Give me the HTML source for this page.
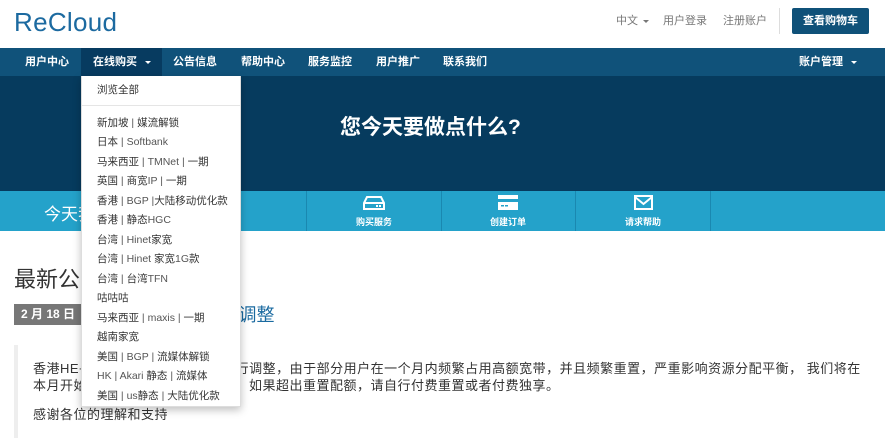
<!DOCTYPE html>
<html><head><meta charset="utf-8"><style>
*{margin:0;padding:0;box-sizing:border-box}
body{width:885px;height:445px;overflow:hidden;background:#fff;font-family:"Liberation Sans","Noto Sans CJK SC",sans-serif;position:relative;font-size:12px;color:#333}
.a{position:absolute;white-space:nowrap}
.logo{left:14px;top:7px;font-size:26px;color:#1c6aa0;letter-spacing:0.3px}
.tl{top:12px;font-size:11px;color:#777}
.btn{left:792px;top:8px;width:77px;height:26px;background:#0f5179;border-radius:2px;color:#fff;font-size:11px;font-weight:bold;text-align:center;line-height:26px}
.nav{left:0;top:48px;width:885px;height:28px;background:#10527a}
.ni{top:48px;height:28px;line-height:28px;color:#fff;font-size:11px;font-weight:bold}
.hero{left:0;top:76px;width:885px;height:115px;background:#063b5e}
.bar{left:0;top:191px;width:885px;height:40px;background:#24a2ca}
.dv{top:191px;width:1px;height:40px;background:#1a88b0}
.bl{top:215px;font-size:9px;color:#fff;font-weight:bold;text-align:center;width:100px}
.dd{left:81px;top:76px;width:160px;height:331px;background:#fff;box-shadow:0 3px 8px rgba(0,0,0,.25);border:1px solid #ddd;border-top:0}
.di{left:97px;font-size:10.5px;color:#333}
.di span{color:#555;font-weight:normal}
.caret{display:inline-block;border-left:3px solid transparent;border-right:3px solid transparent;border-top:3px solid currentColor;vertical-align:middle;margin-left:5px}
</style></head><body>
<div class="a logo">ReCloud</div>
<div class="a tl" style="left:616px">中文<span class="caret"></span></div>
<div class="a tl" style="left:663px">用户登录</div>
<div class="a tl" style="left:723px">注册账户</div>
<div class="a" style="left:779px;top:8px;width:1px;height:26px;background:#ddd"></div>
<div class="a btn">查看购物车</div>

<div class="a nav"></div>
<div class="a" style="left:81px;top:48px;width:81px;height:28px;background:#073b60"></div>
<div class="a ni" style="left:25px">用户中心</div>
<div class="a ni" style="left:93px">在线购买<span class="caret" style="margin-left:8px"></span></div>
<div class="a ni" style="left:173px">公告信息</div>
<div class="a ni" style="left:241px">帮助中心</div>
<div class="a ni" style="left:308px">服务监控</div>
<div class="a ni" style="left:376px">用户推广</div>
<div class="a ni" style="left:443px">联系我们</div>
<div class="a ni" style="left:799px">账户管理<span class="caret" style="margin-left:8px"></span></div>

<div class="a hero"></div>
<div class="a" style="left:340px;top:111px;font-size:21px;color:#fff;font-weight:bold">您今天要做点什么?</div>

<div class="a bar"></div>
<div class="a" style="left:44px;top:200px;font-size:17px;color:#fff">今天我能为您做什么?</div>
<div class="a dv" style="left:306px"></div>
<div class="a dv" style="left:441px"></div>
<div class="a dv" style="left:575px"></div>
<div class="a dv" style="left:710px"></div>
<svg class="a" style="left:363px;top:195px" width="22" height="16" viewBox="0 0 22 16"><path d="M4 2h14l3 6v6H1V8z" fill="none" stroke="#fff" stroke-width="2"/><path d="M1 8h20" stroke="#fff" stroke-width="2"/><rect x="13" y="10" width="2" height="2" fill="#fff"/><rect x="16" y="10" width="2" height="2" fill="#fff"/></svg>
<div class="a bl" style="left:324px">购买服务</div>
<svg class="a" style="left:498px;top:195px" width="22" height="16" viewBox="0 0 22 16"><rect x="0" y="0" width="20" height="15" fill="#fff"/><rect x="0" y="4" width="20" height="3" fill="#24a2ca"/><rect x="3" y="10" width="3" height="1.5" fill="#24a2ca"/><rect x="7" y="10" width="3" height="1.5" fill="#24a2ca"/></svg>
<div class="a bl" style="left:458px">创建订单</div>
<svg class="a" style="left:634px;top:195px" width="20" height="16" viewBox="0 0 20 16"><rect x="1" y="1" width="17" height="13" fill="none" stroke="#fff" stroke-width="2"/><path d="M1 2l8.5 7L18 2" fill="none" stroke="#fff" stroke-width="2"/></svg>
<div class="a bl" style="left:593px">请求帮助</div>

<div class="a" style="left:14px;top:262px;font-size:22px;color:#333">最新公告</div>
<div class="a" style="left:14px;top:304px;width:72px;height:21px;background:#777;color:#fff;font-weight:bold;font-size:12px;line-height:21px;padding-left:7px">2 月 18 日</div>
<div class="a" style="left:95px;top:301px;font-size:18px;color:#1a6aa0">香港HE+流量重置调整</div>
<div class="a" style="left:14px;top:345px;width:4px;height:93px;background:#eee"></div>
<div class="a" style="left:33px;top:360px;font-size:13px;letter-spacing:0.5px;color:#333;line-height:17px">香港HE+流量重置规则将在近期进行调整，由于部分用户在一个月内频繁占用高额宽带，并且频繁重置，严重影响资源分配平衡， 我们将在<br>本月开始限制每个月只能重置一次，如果超出重置配额，请自行付费重置或者付费独享。</div>
<div class="a" style="left:33px;top:404px;font-size:13px;letter-spacing:0.5px;color:#333">感谢各位的理解和支持</div>

<div class="a dd"></div>
<div class="a" style="left:82px;top:105px;width:158px;height:1px;background:#e5e5e5"></div>
<div class="a di" style="top:82px">浏览全部</div>
<div class="a di" style="top:115px">新加坡 <span>|</span> 媒流解锁</div>
<div class="a di" style="top:134px">日本 <span>| Softbank</span></div>
<div class="a di" style="top:154px">马来西亚 <span>| TMNet |</span> 一期</div>
<div class="a di" style="top:173px">英国 <span>|</span> 商宽<span>IP |</span> 一期</div>
<div class="a di" style="top:193px">香港 <span>| BGP |</span>大陆移动优化款</div>
<div class="a di" style="top:212px">香港 <span>|</span> 静态<span>HGC</span></div>
<div class="a di" style="top:232px">台湾 <span>| Hinet</span>家宽</div>
<div class="a di" style="top:251px">台湾 <span>| Hinet</span> 家宽<span>1G</span>款</div>
<div class="a di" style="top:271px">台湾 <span>|</span> 台湾<span>TFN</span></div>
<div class="a di" style="top:290px">咕咕咕</div>
<div class="a di" style="top:310px">马来西亚 <span>| maxis |</span> 一期</div>
<div class="a di" style="top:329px">越南家宽</div>
<div class="a di" style="top:349px">美国 <span>| BGP |</span> 流媒体解锁</div>
<div class="a di" style="top:368px"><span>HK | Akari</span> 静态 <span>|</span> 流媒体</div>
<div class="a di" style="top:388px">美国 <span>| us</span>静态 <span>|</span> 大陆优化款</div>
</body></html>
